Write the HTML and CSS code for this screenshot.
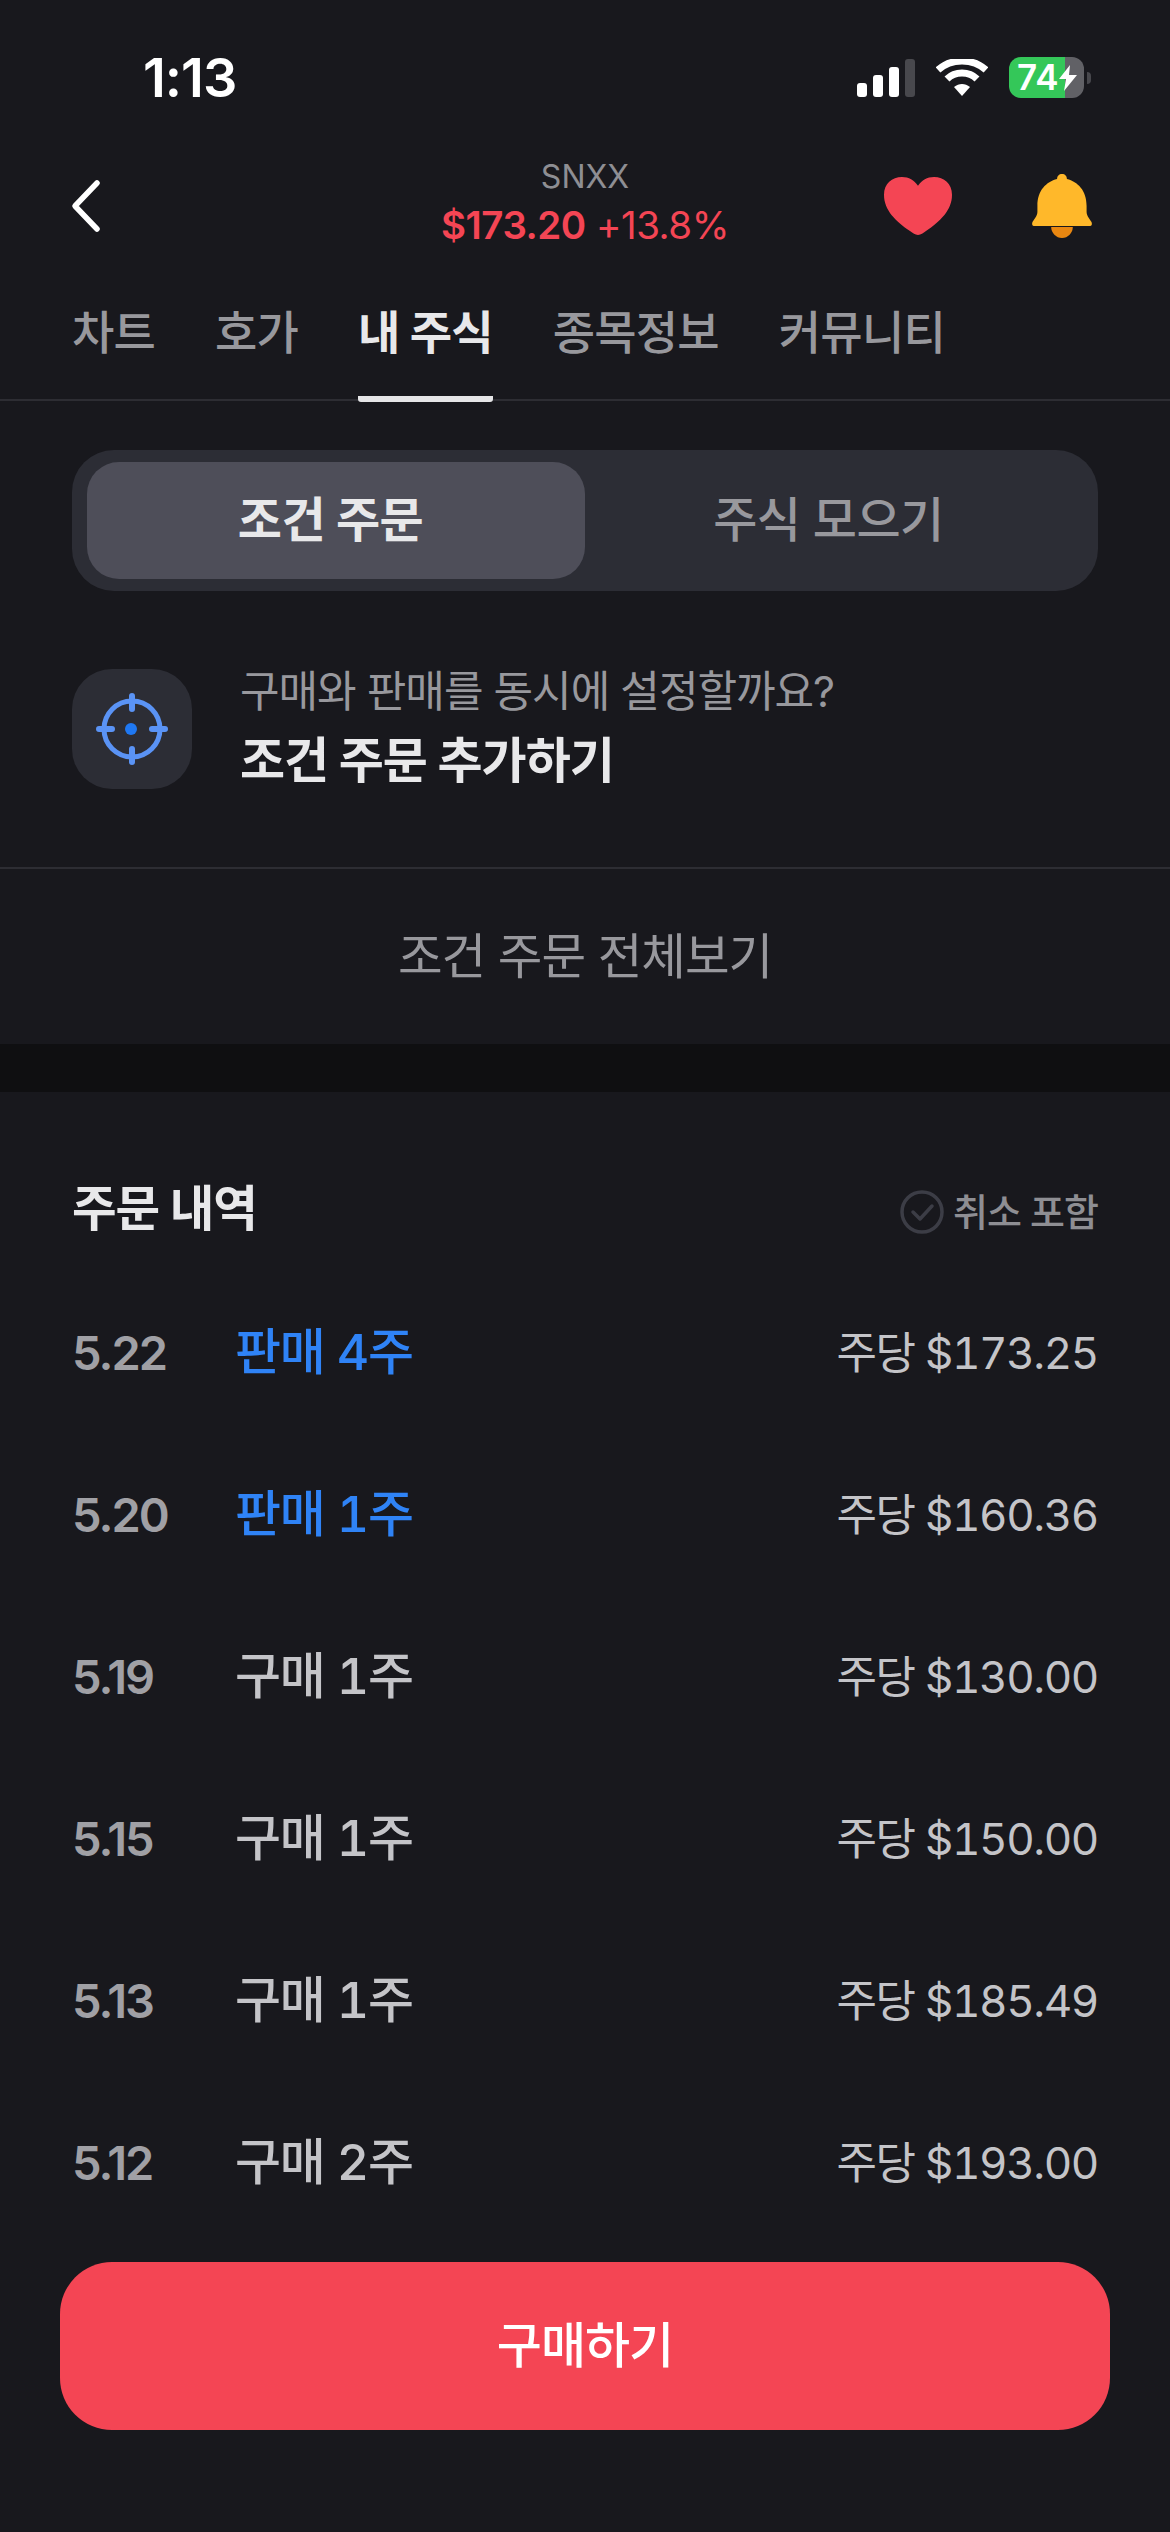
FILE: index.html
```html
<!DOCTYPE html>
<html lang="ko">
<head>
    <meta charset="UTF-8">
    <meta name="viewport" content="width=device-width, initial-scale=1.0">
    <title>SNXX</title>
    <link rel="stylesheet" href="styles.css">
</head>
<body>
    <div class="screen">
        <!-- Status bar -->
        <div class="status-bar">
            <span class="clock">1:13</span>
            <div class="status-icons">
                <svg class="signal" width="58" height="38" viewBox="0 0 58 38">
                    <rect x="0" y="24" width="10" height="14" rx="3" fill="#fff"/>
                    <rect x="16" y="16" width="10" height="22" rx="3" fill="#fff"/>
                    <rect x="32" y="8" width="10" height="30" rx="3" fill="#fff"/>
                    <rect x="48" y="0" width="10" height="38" rx="3" fill="#48484d"/>
                </svg>
                <svg class="wifi" width="52" height="38" viewBox="0 0 52 38">
                    <path d="M2 11 C15 -1 37 -1 50 11" fill="none" stroke="#fff" stroke-width="7"/>
                    <path d="M11 20 C19 12 33 12 41 20" fill="none" stroke="#fff" stroke-width="7"/>
                    <path d="M18 28 C23 24 29 24 34 28 L26 37 Z" fill="#fff"/>
                </svg>
                <div class="battery">
                    <div class="battery-body">
                        <span class="battery-level">74</span>
                        <svg class="bolt" width="18" height="26" viewBox="0 0 18 26">
                            <path d="M11 0 L0 14 H7 L5 26 L18 10 H10 Z" fill="#fff"/>
                        </svg>
                    </div>
                    <div class="battery-cap"></div>
                </div>
            </div>
        </div>

        <!-- Header -->
        <header class="top-nav">
            <svg class="back" width="34" height="56" viewBox="0 0 34 56">
                <path d="M27 5 L5 28 L27 51" fill="none" stroke="#fff" stroke-width="5.5" stroke-linecap="round" stroke-linejoin="round"/>
            </svg>
            <div class="ticker">
                <div class="symbol">SNXX</div>
                <div class="quote"><b>$173.20</b> +13.8%</div>
            </div>
            <div class="nav-actions">
                <svg width="68" height="58" viewBox="0 0 68 59" preserveAspectRatio="none">
                    <path d="M34 59 C31 59 29 57 26 55 C12 45 0 34 0 18 C0 7 8 0 18 0 C25 0 30 3 34 9 C38 3 43 0 50 0 C60 0 68 7 68 18 C68 34 56 45 42 55 C39 57 37 59 34 59 Z" fill="#f44554"/>
                </svg>
                <svg width="60" height="64" viewBox="0.5 0 61 64" preserveAspectRatio="none">
                    <path d="M31 53 m-11 0 h22 c0 6 -5 11 -11 11 s-11 -5 -11 -11 Z" fill="#e98711"/>
                    <path d="M26 5 C26 2 28 0 31 0 C34 0 36 2 36 5 C47 8 56 16 56 32 V38 C56 42 60 46 61 48 C62 51 61 52 58 52 H4 C1 52 0 51 1 48 C2 46 6 42 6 38 V32 C6 16 15 8 26 5 Z" fill="#ffb82a"/>
                </svg>
            </div>
        </header>

        <!-- Tabs -->
        <nav class="tabs">
            <a class="tab">차트</a>
            <a class="tab">호가</a>
            <a class="tab active">내 주식</a>
            <a class="tab">종목정보</a>
            <a class="tab">커뮤니티</a>
        </nav>

        <div class="segment-wrap">
            <div class="segment">
                <div class="segment-item selected">조건 주문</div>
                <div class="segment-item">주식 모으기</div>
            </div>
        </div>

        <!-- Add condition order -->
        <div class="promo">
            <div class="promo-icon">
                <svg width="72" height="72" viewBox="0 0 72 72">
                    <circle cx="36" cy="36" r="28" fill="none" stroke="#5a93f5" stroke-width="5"/>
                    <path d="M36 3 V16 M36 56 V69 M3 36 H16 M56 36 H69" stroke="#5a93f5" stroke-width="6" stroke-linecap="round"/>
                    <circle cx="35" cy="36" r="6" fill="#1f78f2"/>
                </svg>
            </div>
            <div class="promo-text">
                <p class="promo-sub">구매와 판매를 동시에 설정할까요?</p>
                <p class="promo-title">조건 주문 추가하기</p>
            </div>
        </div>

        <div class="view-all">조건 주문 전체보기</div>
        <div class="band"></div>

        <!-- Order history -->
        <section class="orders">
            <div class="orders-head">
                <h2>주문 내역</h2>
                <div class="cancel-filter">
                    <svg width="44" height="44" viewBox="0 0 44 44">
                        <circle cx="22" cy="22" r="20" fill="none" stroke="#3c3d46" stroke-width="3.5"/>
                        <path d="M13 22 L20 29 L32 16" fill="none" stroke="#3c3d46" stroke-width="3.5" stroke-linecap="round" stroke-linejoin="round"/>
                    </svg>
                    <span>취소 포함</span>
                </div>
            </div>
            <div class="order"><span class="date">5.22</span><span class="kind sell">판매 4주</span><span class="price">주당 $173.25</span></div>
            <div class="order"><span class="date">5.20</span><span class="kind sell">판매 1주</span><span class="price">주당 $160.36</span></div>
            <div class="order"><span class="date">5.19</span><span class="kind">구매 1주</span><span class="price">주당 $130.00</span></div>
            <div class="order"><span class="date">5.15</span><span class="kind">구매 1주</span><span class="price">주당 $150.00</span></div>
            <div class="order"><span class="date">5.13</span><span class="kind">구매 1주</span><span class="price">주당 $185.49</span></div>
            <div class="order"><span class="date">5.12</span><span class="kind">구매 2주</span><span class="price">주당 $193.00</span></div>
        </section>

        <button class="buy" type="button">구매하기</button>
    </div>
</body>
</html>
```

FILE: styles.css
```css
* {
    box-sizing: border-box;
}
body {
    margin: 0;
    background-color: #18181d;
    font-family: Inter, "Noto Sans CJK KR", sans-serif;
    color: #fff;
}
p, h2 {
    margin: 0;
}
.screen {
    width: 1170px;
    height: 2532px;
    overflow: hidden;
    background-color: #18181d;
}

/* status bar */
.status-bar {
    height: 114px;
    padding: 49px 79px 0 143px;
    display: flex;
    justify-content: space-between;
    align-items: flex-start;
}
.clock {
    font-size: 54px;
    font-weight: 600;
    line-height: 58px;
    letter-spacing: -1px;
}
.status-icons {
    display: flex;
    align-items: center;
    gap: 21px;
    padding: 8px 0 0;
}
.battery {
    display: flex;
    align-items: center;
    gap: 3px;
}
.battery-body {
    width: 75px;
    height: 41px;
    border-radius: 12px;
    background: linear-gradient(to right, #34c759 0, #34c759 75%, #616166 75%);
    display: flex;
    align-items: center;
    padding-left: 8px;
}
.battery-level {
    font-size: 35px;
    font-weight: 600;
    line-height: 41px;
}
.bolt {
    margin-left: 1px;
}
.battery-cap {
    width: 4px;
    height: 12px;
    border-radius: 0 6px 6px 0;
    background-color: #48484d;
}

/* header */
.top-nav {
    height: 136px;
    position: relative;
    display: flex;
    justify-content: space-between;
    align-items: center;
    padding: 48px 78px 0 70px;
}
.ticker {
    position: absolute;
    left: 0;
    right: 0;
    top: 43px;
    text-align: center;
}
.symbol {
    font-size: 32px;
    line-height: 40px;
    color: #8e8e93;
}
.quote {
    font-size: 38.5px;
    line-height: 56px;
    color: #f44554;
    letter-spacing: -0.5px;
}
.quote b {
    font-weight: 600;
}
.nav-actions {
    display: flex;
    align-items: center;
    gap: 80px;
}

/* tabs */
.tabs {
    height: 151px;
    display: flex;
    gap: 60px;
    padding: 0 72px;
    border-bottom: 2px solid #2d2d33;
}
.tab {
    height: 152px;
    padding-top: 50px;
    font-size: 46px;
    line-height: 64px;
    font-weight: 500;
    color: #98989d;
    letter-spacing: -0.8px;
    border-bottom: 6px solid transparent;
}
.tab.active {
    color: #e8e8ea;
    font-weight: 700;
    border-bottom-color: #e5e5e7;
    border-radius: 0 0 3px 3px;
}

/* segmented control */
.segment-wrap {
    padding: 49px 72px 0;
}
.segment {
    height: 141px;
    display: grid;
    grid-template-columns: 1fr 1fr;
    padding: 12px 15px;
    border-radius: 42px;
    background-color: #2c2d35;
}
.segment-item {
    display: flex;
    align-items: center;
    justify-content: center;
    padding: 0 11px 10px 0;
    font-size: 48px;
    font-weight: 500;
    color: #98989d;
    letter-spacing: -0.5px;
    border-radius: 32px;
}
.segment-item.selected {
    font-weight: 700;
    color: #e8e8ea;
    background-color: #4e4e59;
}

/* promo row */
.promo {
    height: 278px;
    padding: 78px 72px 0;
    display: flex;
    gap: 48px;
    border-bottom: 2px solid #2d2d33;
}
.promo-icon {
    width: 120px;
    height: 120px;
    border-radius: 40px;
    background-color: #2c2d35;
    display: flex;
    align-items: center;
    justify-content: center;
}
.promo-sub {
    font-size: 43px;
    line-height: 50px;
    color: #98989d;
    letter-spacing: -1px;
    margin-top: -3px;
}
.promo-title {
    font-size: 49px;
    line-height: 60px;
    font-weight: 700;
    color: #e8e8ea;
    letter-spacing: -1px;
    margin-top: 15px;
}
.view-all {
    height: 175px;
    display: flex;
    align-items: center;
    justify-content: center;
    padding-bottom: 7px;
    font-size: 48.5px;
    font-weight: 400;
    color: #98989d;
    letter-spacing: -1px;
}
.band {
    height: 48px;
    background-color: #0f0f11;
}

/* orders */
.orders {
    height: 1170px;
    padding: 0 72px;
}
.orders-head {
    height: 175px;
    padding-top: 85px;
    display: flex;
    justify-content: space-between;
    align-items: flex-start;
}
.orders-head h2 {
    font-size: 48.5px;
    line-height: 64px;
    font-weight: 700;
    color: #e8e8ea;
    letter-spacing: -1px;
}
.cancel-filter {
    display: flex;
    align-items: center;
    gap: 9px;
    height: 64px;
    font-size: 38px;
    font-weight: 500;
    color: #8e8e93;
    letter-spacing: -1px;
}
.cancel-filter svg {
    margin-top: 6px;
}
.order {
    height: 162px;
    display: flex;
    align-items: center;
}
.date {
    width: 163px;
    margin-top: 8px;
    font-size: 47px;
    font-weight: 600;
    color: #a0a0a5;
    letter-spacing: -2px;
}
.kind {
    flex: 1;
    font-size: 50px;
    font-weight: 500;
    color: #c4c4c8;
    letter-spacing: -1.2px;
    font-variant-numeric: tabular-nums;
}
.kind.sell {
    color: #2f83f6;
}
.price {
    margin-top: 4px;
    font-size: 44px;
    color: #c4c4c8;
    letter-spacing: -1.4px;
    font-variant-numeric: tabular-nums;
}

/* buy button */
.buy {
    display: block;
    width: 1050px;
    height: 168px;
    margin: 0 auto;
    padding: 0 0 10px;
    border: none;
    border-radius: 52px;
    background-color: #f44554;
    color: #fff;
    font-family: inherit;
    font-size: 49px;
    font-weight: 500;
    letter-spacing: -1px;
}
```
